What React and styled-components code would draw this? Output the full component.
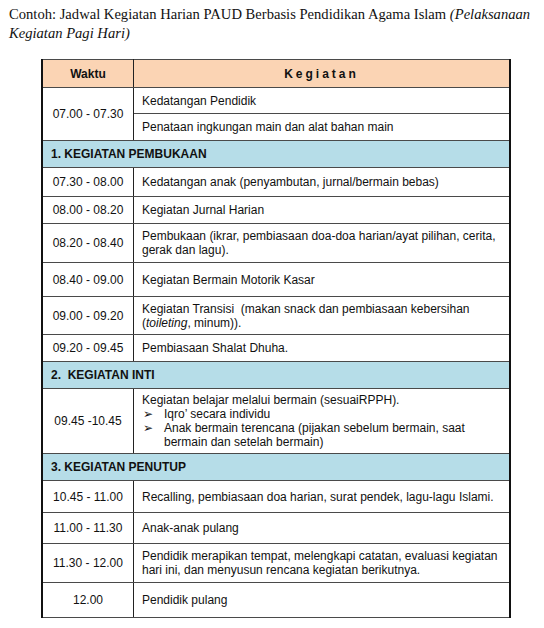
import React from "react";
import styled, { createGlobalStyle } from "styled-components";

const Global = createGlobalStyle`
  html, body { margin: 0; padding: 0; background: #fff; }
  body { font-family: "Liberation Sans", Arial, sans-serif; color: #000; }
`;

const Page = styled.div`
  width: 544px;
  height: 628px;
  box-sizing: border-box;
  padding: 5px 10px 0 9px;
  overflow: hidden;
`;

const Title = styled.p`
  margin: 0;
  font-family: "Liberation Serif", "Times New Roman", serif;
  font-size: 14.6px;
  line-height: 19px;
  color: #111;
  em { font-style: italic; }
`;

const Table = styled.table`
  margin: 16px 0 0 32px;
  width: 470px;
  border-collapse: collapse;
  table-layout: fixed;
  border-left: 2px solid #111;
  border-right: 2px solid #111;
`;

const Row = styled.tr`
  height: ${(p) => p.$h}px;
  background: ${(p) => (p.$kind === "head" ? "#FBD4B4" : p.$kind === "section" ? "#B6DDE8" : "#fff")};
`;

const Cell = styled.td`
  border-top: 1.5px solid #4a4a4a;
  border-bottom: 1.5px solid #4a4a4a;
  border-left: 1px solid #222;
  border-right: 1px solid #222;
  padding: 3px 8px;
  font-size: 12px;
  line-height: 14px;
  vertical-align: middle;
  color: #111;
`;

const TimeCell = styled(Cell)`
  width: 74px;
  text-align: center;
`;

const HeadCell = styled(Cell)`
  text-align: center;
  font-weight: bold;
  letter-spacing: ${(p) => (p.$spaced ? "3px" : "0")};
`;

const SectionCell = styled(Cell)`
  font-weight: bold;
  white-space: pre;
  padding-left: 8px;
`;

const BulletList = styled.ul`
  list-style: none;
  margin: 0;
  padding: 0;
`;

const Bullet = styled.li`
  display: flex;
  padding-left: 1px;
  &::before {
    content: "➢";
    font-family: "DejaVu Sans", sans-serif;
    font-size: 12px;
    width: 21px;
    flex: none;
  }
`;

const rows = [
  { type: "time", time: "07.00 - 07.30", span: 2, h: 26, desc: "Kedatangan Pendidik" },
  { type: "cont", h: 27, desc: "Penataan ingkungan main dan alat bahan main" },
  { type: "section", h: 27, label: "1. KEGIATAN PEMBUKAAN" },
  { type: "time", time: "07.30 - 08.00", h: 29, desc: "Kedatangan anak (penyambutan, jurnal/bermain bebas)" },
  { type: "time", time: "08.00 - 08.20", h: 27, desc: "Kegiatan Jurnal Harian" },
  { type: "time", time: "08.20 - 08.40", h: 39, desc: "Pembukaan (ikrar, pembiasaan doa-doa harian/ayat pilihan, cerita, gerak dan lagu)." },
  { type: "time", time: "08.40 - 09.00", h: 34, desc: "Kegiatan Bermain Motorik Kasar" },
  {
    type: "time",
    time: "09.00 - 09.20",
    h: 38,
    desc: (
      <>
        Kegiatan Transisi&nbsp; (makan snack dan pembiasaan kebersihan (<i>toileting</i>, minum)).
      </>
    ),
  },
  { type: "time", time: "09.20 - 09.45", h: 27, desc: "Pembiasaan Shalat Dhuha." },
  { type: "section", h: 27, label: "2.  KEGIATAN INTI" },
  {
    type: "time",
    time: "09.45 -10.45",
    h: 65,
    desc: (
      <>
        Kegiatan belajar melalui bermain (sesuaiRPPH).
        <BulletList>
          <Bullet>Iqro’ secara individu</Bullet>
          <Bullet>Anak bermain terencana (pijakan sebelum bermain, saat bermain dan setelah bermain)</Bullet>
        </BulletList>
      </>
    ),
  },
  { type: "section", h: 27, label: "3. KEGIATAN PENUTUP" },
  { type: "time", time: "10.45 - 11.00", h: 32, desc: "Recalling, pembiasaan doa harian, surat pendek, lagu-lagu Islami." },
  { type: "time", time: "11.00 - 11.30", h: 31, desc: "Anak-anak pulang" },
  { type: "time", time: "11.30 - 12.00", h: 39, desc: "Pendidik merapikan tempat, melengkapi catatan, evaluasi kegiatan hari ini, dan menyusun rencana kegiatan berikutnya." },
  { type: "time", time: "12.00", h: 35, desc: "Pendidik pulang" },
];

export default function App() {
  return (
    <Page>
      <Global />
      <Title>
        Contoh: Jadwal Kegiatan Harian PAUD Berbasis Pendidikan Agama Islam <em>(Pelaksanaan Kegiatan Pagi Hari)</em>
      </Title>
      <Table>
        <tbody>
          <Row $kind="head" $h={28}>
            <HeadCell style={{ width: 74 }}>Waktu</HeadCell>
            <HeadCell $spaced>Kegiatan</HeadCell>
          </Row>
          {rows.map((r, i) => {
            if (r.type === "section") {
              return (
                <Row key={i} $kind="section" $h={r.h}>
                  <SectionCell colSpan={2}>{r.label}</SectionCell>
                </Row>
              );
            }
            return (
              <Row key={i} $h={r.h}>
                {r.type === "time" && <TimeCell rowSpan={r.span || 1}>{r.time}</TimeCell>}
                <Cell>{r.desc}</Cell>
              </Row>
            );
          })}
        </tbody>
      </Table>
    </Page>
  );
}
